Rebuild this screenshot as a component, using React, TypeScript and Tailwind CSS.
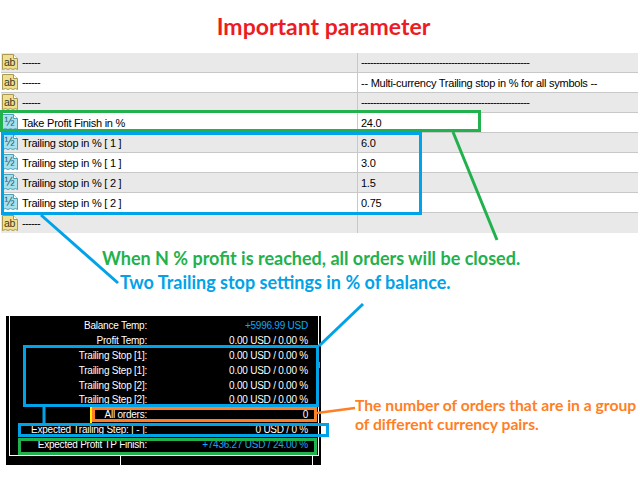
const LONG_DASH = "--------------------------------------------------------";

const rows = [
  { kind: "ab", name: "------", value: LONG_DASH },
  { kind: "ab", name: "------", value: "-- Multi-currency Trailing stop in % for all symbols --" },
  { kind: "ab", name: "------", value: LONG_DASH },
  { kind: "num", name: "Take Profit Finish in %", value: "24.0" },
  { kind: "num", name: "Trailing stop in % [ 1 ]", value: "6.0" },
  { kind: "num", name: "Trailing step in % [ 1 ]", value: "3.0" },
  { kind: "num", name: "Trailing stop in % [ 2 ]", value: "1.5" },
  { kind: "num", name: "Trailing step in % [ 2 ]", value: "0.75" },
  { kind: "ab", name: "------", value: "" },
];

const stats = [
  { label: "Balance Temp:", value: "+5996.99 USD", blue: true },
  { label: "Profit Temp:", value: "0.00 USD / 0.00 %" },
  { label: "Trailing Stop [1]:", value: "0.00 USD / 0.00 %" },
  { label: "Trailing Step [1]:", value: "0.00 USD / 0.00 %" },
  { label: "Trailing Stop [2]:", value: "0.00 USD / 0.00 %" },
  { label: "Trailing Step [2]:", value: "0.00 USD / 0.00 %" },
  { label: "All orders:", value: "0" },
  { label: "Expected Trailing Step: [ - ]:", value: "0 USD / 0 %" },
  { label: "Expected Profit TP Finish:", value: "+7436.27 USD / 24.00 %", blue: true },
];

function ParamIcon({ kind }: { kind: string }) {
  const ab = kind === "ab";
  const edge = ab ? "#a89a50" : "#4f9fb5";
  return (
    <svg width="16" height="17" viewBox="0 0 16 17" className="shrink-0">
      <path
        d="M0.5 0.5H11.5L15.5 4.5V15.5L13.5 14.5L11 15.5L8.5 14.5L6 15.5L3.5 14.5L0.5 15.5Z"
        fill={ab ? "#efdf8f" : "#a8e0ec"}
        stroke={edge}
      />
      <path d="M11.5 0.5V4.5H15.5" fill="#fff" stroke={edge} />
      <text
        x={ab ? 2 : 2.5}
        y="12"
        fontSize={ab ? 10.5 : 12}
        fill={ab ? "#3a3a20" : "#1c5f78"}
        fontFamily="Liberation Sans, sans-serif"
      >
        {ab ? "ab" : "½"}
      </text>
    </svg>
  );
}

// Hand-drawn callouts that lie over the table and the panel
function Callouts() {
  const green = "#22b14c";
  const blue = "#00a2e8";
  const orange = "#ff7f27";
  return (
    <svg className="absolute inset-0 pointer-events-none" width="640" height="480" fill="none" strokeWidth="3">
      <rect x="1.5" y="111.5" width="478" height="19" stroke={green} />
      <rect x="2.5" y="133.5" width="418" height="80" stroke={blue} />
      <line x1="453" y1="132" x2="497" y2="240" stroke={green} />
      <line x1="41" y1="215" x2="118" y2="283" stroke={blue} />

      <rect x="24.5" y="346.5" width="293" height="59" stroke={blue} />
      <line x1="319" y1="346" x2="363" y2="304" stroke={blue} />
      <line x1="44" y1="407" x2="44" y2="423" stroke={blue} />
      <rect x="19.5" y="424.5" width="308" height="11" stroke={blue} />
      <rect x="93.5" y="408.5" width="222" height="12" stroke={orange} />
      <line x1="91" y1="407" x2="91" y2="423" stroke="#fff200" strokeWidth="2" />
      <line x1="317" y1="413" x2="355" y2="408" stroke={orange} strokeWidth="2.5" />
      <rect x="19.5" y="439.5" width="296" height="14" stroke={green} />
      <line x1="319.5" y1="362" x2="319.5" y2="368" stroke="#22c04a" strokeWidth="1" />
    </svg>
  );
}

export default function App() {
  return (
    <div className="relative w-[640px] h-[480px] bg-white overflow-hidden font-['Liberation_Sans',sans-serif]">
      <h1 className="h-[53px] pl-[7px] flex items-center justify-center font-['Lato',sans-serif] font-bold text-[23px] text-[#ed1c24]">
        Important parameter
      </h1>

      <div className="ml-px mr-[2px] text-[11px] text-black tracking-[-0.25px]">
        {rows.map((row, i) => (
          <div
            key={i}
            className={`flex h-5 ${i % 2 === 0 ? "bg-[#e9e9e9]" : "bg-white"} ${i < rows.length - 1 ? "border-b border-[#c8c8c8]" : ""}`}
          >
            <div className="w-[356px] flex items-center gap-1 pl-px">
              <ParamIcon kind={row.kind} />
              <span className={row.kind === "ab" ? "tracking-[-0.66px]" : "pt-px"}>{row.name}</span>
            </div>
            <div className="flex-1 flex items-center pl-[3px] border-l border-[#c8c8c8]">
              <span className={row.value === LONG_DASH ? "tracking-[-0.66px]" : "pt-px"}>{row.value}</span>
            </div>
          </div>
        ))}
      </div>

      <div className="h-[83px] pt-[13px] font-['Lato',sans-serif] font-bold text-[18px] leading-6">
        <p className="pl-[102px] text-[#22b14c]">When N % profit is reached, all orders will be closed.</p>
        <p className="pl-[120px] text-[#00a2e8]">Two Trailing stop settings in % of balance.</p>
      </div>

      <div className="flex items-start">
        <div className="ml-[6px] w-[315px] h-[149px] bg-black flex flex-col">
          <div className="ml-[3px] mr-[2px] h-[140px] pt-[2px] border-l border-r border-b border-white text-[10px] text-white tracking-[-0.23px]">
            {stats.map((s) => (
              <div key={s.label} className="grid grid-cols-[137px_161px] h-[14.9px] items-center">
                <span className="text-right whitespace-nowrap justify-self-end">{s.label}</span>
                <span className={`text-right ${s.blue ? "text-[#10a8f0]" : ""}`}>{s.value}</span>
              </div>
            ))}
          </div>
          <div className="flex-1 flex pl-[114px] gap-[191px]">
            <div className="w-px bg-white" />
            <div className="w-px bg-white" />
          </div>
        </div>
        <p className="ml-[34px] mt-[80px] font-['Lato',sans-serif] font-bold text-[15.7px] leading-[19px] text-[#ff7f27] whitespace-nowrap">
          The number of orders that are in a group
          <br />
          of different currency pairs.
        </p>
      </div>

      <Callouts />
    </div>
  );
}
